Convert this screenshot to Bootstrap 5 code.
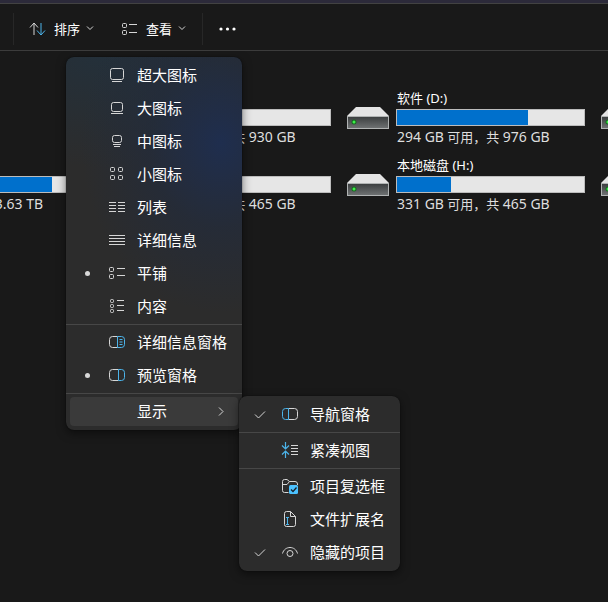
<!DOCTYPE html>
<html lang="zh-CN" data-bs-theme="dark">
<head>
<meta charset="utf-8">
<meta name="viewport" content="width=device-width, initial-scale=1">
<title>此电脑</title>
<link href="https://cdn.jsdelivr.net/npm/bootstrap@5.3.0/dist/css/bootstrap.min.css" rel="stylesheet">
<style>
body { background: #191919; color: #fff; font-family: "Noto Sans", "Noto Sans CJK SC", sans-serif; font-size: 13px; line-height: 20px; }
svg { fill: none; stroke: #d6d6d6; display: block; flex: none; }
svg .accent { stroke: #4cb4ea; }
.titlebar-edge { height: 4px; background: #2c2a3a; border-bottom: 1px solid #424242; }
.toolbar { height: 47px; border-bottom: 1px solid #3c3c3c; padding: 4px 0 0 13px; }
.toolbar .btn { --bs-btn-padding-x: 0; --bs-btn-padding-y: 0; --bs-btn-font-size: 13px; --bs-btn-color: #fff; --bs-btn-border-width: 0; line-height: 20px; }
.toolbar .vr { height: 32px; color: #555; align-self: center; }
.toolbar .dots { fill: #fff; stroke: none; }
.tool-sort { margin-left: 15px; }
.tool-view { margin: 0 16px 0 27px; }
.tool-more { margin-left: 16px; }
.chev { margin-left: -2px; }
.pane-area { min-height: calc(100vh - 51px); padding-top: 37px; }
.drives { display: grid; grid-template-columns: repeat(4, 238px); gap: 8px 16px; margin-left: -161px; }
.drive { gap: 7px; }
.drive-art { margin-top: 19px; stroke: none; }
.drive-name, .drive-free { padding-left: 1px; min-height: 20px; white-space: nowrap; }
.drive-free { color: #dedede; }
.drive-free .amount { font-size: 14px; }
.drive .progress { --bs-progress-height: 17px; --bs-progress-bg: #e6e6e6; --bs-progress-bar-bg: #0070cc; --bs-progress-border-radius: 0; border: 1px solid #bcbcbc; margin: 1px 0; }
.second-col { grid-column-start: 2; }
.popup { --bs-dropdown-bg: #2c2c2c; --bs-dropdown-border-width: 0; --bs-dropdown-border-radius: 8px; --bs-dropdown-padding-y: 2px; --bs-dropdown-padding-x: 0; --bs-dropdown-min-width: 0; --bs-dropdown-divider-bg: #474747; --bs-dropdown-divider-margin-y: 1px; --bs-dropdown-font-size: 15px; box-shadow: 0 3px 10px rgba(0,0,0,.5), 0 0 1px #000; }
.popup.show { display: flex; flex-direction: column; }
.popup .dropdown-divider { opacity: 1; }
.popup .dropdown-item { --bs-dropdown-item-padding-x: 0; --bs-dropdown-item-padding-y: 0; color: #fff; width: auto; height: 29px; margin: 2px 4px; border-radius: 4px; line-height: 29px; }
.popup .dropdown-item:hover, .popup .dropdown-item.is-open { background: #3a3a3a; }
.view-menu { top: 6px; left: 66px; width: 176px;
  background: radial-gradient(ellipse 140px 170px at 88% 23%, rgba(30,46,80,.95), rgba(33,43,62,.6) 50%, transparent), radial-gradient(ellipse 190px 110px at 20% 0, #24303a, transparent), #2c2c2c; }
.show-menu { top: 339px; left: 173px; width: 161px; }
.mark-slot { width: 34px; margin-right: 4px; flex: none; display: flex; justify-content: center; }
.bullet { width: 5px; height: 5px; border-radius: 50%; background: #d8d8d8; }
.icon-slot { width: 18px; flex: none; margin-right: 11px; }
.open-arrow { margin-left: auto; margin-right: 13px; }
</style>
<script src="https://cdn.jsdelivr.net/npm/bootstrap@5.3.0/dist/js/bootstrap.bundle.min.js"></script>
</head>
<body>
<svg class="position-absolute" width="0" height="0" aria-hidden="true">
  <defs>
    <linearGradient id="front" x1="0" y1="0" x2="0" y2="1"><stop offset="0" stop-color="#3a3d3e"/><stop offset="1" stop-color="#707374"/></linearGradient>
    <symbol id="disk" viewBox="0 0 42 22">
      <path d="M9 0H33L42 9H0Z" fill="#e4e4e4"/>
      <rect x=".5" y="9.500" width="41" height="12" fill="url(#front)" stroke="#b0b3b3"/>
      <circle cx="7" cy="15" r="2.500" fill="#176a20"/><circle cx="7" cy="15" r="1.500" fill="#3df04a"/>
    </symbol>
  </defs>
</svg>
<div class="titlebar-edge"></div>
<header class="toolbar d-flex align-items-center" role="toolbar" aria-label="命令栏">
  <div class="vr"></div>
  <button type="button" class="btn tool-sort d-flex align-items-center">
    <svg width="17" height="16" viewBox="0 0 17 16"><path d="M5 14V2M1 6.500L5 2L9 6.500"/><path class="accent" d="M12 2V14M8 9.500L12 14L16 9.500"/></svg>
    <span class="ms-2 me-2">排序</span>
    <svg class="chev" width="8" height="8" viewBox="0 0 8 8"><path d="M1 1.500L4 4.500L7 1.500"/></svg>
  </button>
  <button type="button" class="btn tool-view d-flex align-items-center" aria-haspopup="menu" aria-expanded="true">
    <svg width="17" height="16" viewBox="0 0 17 16"><rect x="1.500" y="2.500" width="4" height="4" rx="1"/><rect x="1.500" y="9.500" width="4" height="4" rx="1"/><path d="M8 3.500H16M8 11.500H16"/></svg>
    <span class="ms-2 me-2">查看</span>
    <svg class="chev" width="8" height="8" viewBox="0 0 8 8"><path d="M1 1.500L4 4.500L7 1.500"/></svg>
  </button>
  <div class="vr"></div>
  <button type="button" class="btn tool-more" aria-label="查看更多">
    <svg class="dots" width="17" height="6" viewBox="0 0 17 6"><circle cx="2" cy="3" r="1.600"/><circle cx="8.500" cy="3" r="1.600"/><circle cx="15" cy="3" r="1.600"/></svg>
  </button>
</header>

<main class="pane-area position-relative overflow-hidden">
  <section class="drives" aria-label="设备和驱动器">
    <article class="drive d-flex second-col">
      <svg class="drive-art" width="42" height="22"><use href="#disk"/></svg>
      <div class="flex-grow-1"><div class="drive-name"></div><div class="progress"><div class="progress-bar" style="width:40%"></div></div><div class="drive-free"><span class="amount">558 GB</span> 可用，共 <span class="amount">930 GB</span></div></div>
    </article>
    <article class="drive d-flex">
      <svg class="drive-art" width="42" height="22"><use href="#disk"/></svg>
      <div class="flex-grow-1"><div class="drive-name">软件 (D:)</div><div class="progress"><div class="progress-bar" style="width:70%"></div></div><div class="drive-free"><span class="amount">294 GB</span> 可用，共 <span class="amount">976 GB</span></div></div>
    </article>
    <article class="drive d-flex">
      <svg class="drive-art" width="42" height="22"><use href="#disk"/></svg>
      <div class="flex-grow-1"><div class="drive-name"></div><div class="progress"></div></div>
    </article>
    <article class="drive d-flex">
      <svg class="drive-art" width="42" height="22"><use href="#disk"/></svg>
      <div class="flex-grow-1"><div class="drive-name"></div><div class="progress"><div class="progress-bar" style="width:87%"></div></div><div class="drive-free"><span class="amount">483 GB</span> 可用，共 <span class="amount">3.63 TB</span></div></div>
    </article>
    <article class="drive d-flex">
      <svg class="drive-art" width="42" height="22"><use href="#disk"/></svg>
      <div class="flex-grow-1"><div class="drive-name"></div><div class="progress"><div class="progress-bar" style="width:40%"></div></div><div class="drive-free"><span class="amount">279 GB</span> 可用，共 <span class="amount">465 GB</span></div></div>
    </article>
    <article class="drive d-flex">
      <svg class="drive-art" width="42" height="22"><use href="#disk"/></svg>
      <div class="flex-grow-1"><div class="drive-name">本地磁盘 (H:)</div><div class="progress"><div class="progress-bar" style="width:29%"></div></div><div class="drive-free"><span class="amount">331 GB</span> 可用，共 <span class="amount">465 GB</span></div></div>
    </article>
    <article class="drive d-flex">
      <svg class="drive-art" width="42" height="22"><use href="#disk"/></svg>
      <div class="flex-grow-1"><div class="drive-name"></div><div class="progress"></div></div>
    </article>
  </section>

  <div class="dropdown-menu popup view-menu show" role="menu" aria-label="查看">
    <button type="button" class="dropdown-item d-flex align-items-center" role="menuitemradio" aria-checked="false"><span class="mark-slot"></span>
      <svg class="icon-slot" width="18" height="17"><rect x="2.500" y="1.500" width="13" height="11" rx="2"/><path d="M4 14.500H14"/></svg>超大图标</button>
    <button type="button" class="dropdown-item d-flex align-items-center" role="menuitemradio" aria-checked="false"><span class="mark-slot"></span>
      <svg class="icon-slot" width="18" height="17"><rect x="3.500" y="2.500" width="11" height="9" rx="2"/><path d="M3 13.500H15"/></svg>大图标</button>
    <button type="button" class="dropdown-item d-flex align-items-center" role="menuitemradio" aria-checked="false"><span class="mark-slot"></span>
      <svg class="icon-slot" width="18" height="17"><rect x="4.500" y="2.500" width="9" height="7" rx="2"/><path d="M5 11.500H13M6 13.500H12"/></svg>中图标</button>
    <button type="button" class="dropdown-item d-flex align-items-center" role="menuitemradio" aria-checked="false"><span class="mark-slot"></span>
      <svg class="icon-slot" width="18" height="17"><rect x="2.500" y="1.500" width="4" height="4" rx="1"/><rect x="10.500" y="1.500" width="4" height="4" rx="1"/><rect x="2.500" y="9.500" width="4" height="4" rx="1"/><rect x="10.500" y="9.500" width="4" height="4" rx="1"/></svg>小图标</button>
    <button type="button" class="dropdown-item d-flex align-items-center" role="menuitemradio" aria-checked="false"><span class="mark-slot"></span>
      <svg class="icon-slot" width="18" height="17"><path d="M1 3.500H8M10 3.500H17M1 6.500H8M10 6.500H17M1 9.500H8M10 9.500H17M1 12.500H8M10 12.500H17"/></svg>列表</button>
    <button type="button" class="dropdown-item d-flex align-items-center" role="menuitemradio" aria-checked="false"><span class="mark-slot"></span>
      <svg class="icon-slot" width="18" height="17"><path d="M1 3.500H17M1 6.500H17M1 9.500H17M1 12.500H17"/></svg>详细信息</button>
    <button type="button" class="dropdown-item d-flex align-items-center" role="menuitemradio" aria-checked="true"><span class="mark-slot"><span class="bullet"></span></span>
      <svg class="icon-slot" width="18" height="17"><rect x="1.500" y="2.500" width="4" height="4" rx="1"/><rect x="1.500" y="9.500" width="4" height="4" rx="1"/><path d="M9 3.500H17M9 10.500H17"/></svg>平铺</button>
    <button type="button" class="dropdown-item d-flex align-items-center" role="menuitemradio" aria-checked="false"><span class="mark-slot"></span>
      <svg class="icon-slot" width="18" height="17"><rect x="2.500" y="1.500" width="3" height="3" rx="1"/><rect x="2.500" y="6.500" width="3" height="3" rx="1"/><rect x="2.500" y="11.500" width="3" height="3" rx="1"/><path d="M9 2.500H16M9 7.500H16M9 12.500H16"/></svg>内容</button>
    <hr class="dropdown-divider">
    <button type="button" class="dropdown-item d-flex align-items-center" role="menuitemradio" aria-checked="false"><span class="mark-slot"></span>
      <svg class="icon-slot" width="18" height="17"><path d="M9.500 2.500H4.500Q1.500 2.500 1.500 5.500V10.500Q1.500 13.500 4.500 13.500H9.500"/><path class="accent" d="M9.500 2.500H13.500Q16.500 2.500 16.500 5.500V10.500Q16.500 13.500 13.500 13.500H9.500ZM11.500 5.500H14.500M11.500 8H14.500M11.500 10.500H14.500"/></svg>详细信息窗格</button>
    <button type="button" class="dropdown-item d-flex align-items-center" role="menuitemradio" aria-checked="true"><span class="mark-slot"><span class="bullet"></span></span>
      <svg class="icon-slot" width="18" height="17"><path d="M10.500 2.500H4.500Q1.500 2.500 1.500 5.500V10.500Q1.500 13.500 4.500 13.500H10.500"/><path class="accent" d="M10.500 2.500H13.500Q16.500 2.500 16.500 5.500V10.500Q16.500 13.500 13.500 13.500H10.500Z"/></svg>预览窗格</button>
    <hr class="dropdown-divider">
    <button type="button" class="dropdown-item is-open d-flex align-items-center" role="menuitem" aria-haspopup="menu" aria-expanded="true"><span class="mark-slot"></span><span class="icon-slot"></span>显示
      <svg class="open-arrow" width="7" height="11"><path d="M1 1.500L5 5.500L1 9.500"/></svg></button>

    <div class="dropdown-menu popup show-menu show" role="menu" aria-label="显示">
      <button type="button" class="dropdown-item d-flex align-items-center" role="menuitemcheckbox" aria-checked="true"><span class="mark-slot"><svg width="12" height="9"><path d="M1 4.500L4.500 8L11 1.500"/></svg></span>
        <svg class="icon-slot" width="18" height="17"><path d="M7.500 2.500H13.500Q16.500 2.500 16.500 5.500V10.500Q16.500 13.500 13.500 13.500H7.500"/><path class="accent" d="M7.500 2.500H4.500Q1.500 2.500 1.500 5.500V10.500Q1.500 13.500 4.500 13.500H7.500Z"/></svg>导航窗格</button>
      <hr class="dropdown-divider">
      <button type="button" class="dropdown-item d-flex align-items-center" role="menuitemcheckbox" aria-checked="false"><span class="mark-slot"></span>
        <svg class="icon-slot" width="18" height="17"><path class="accent" d="M4.500 0V6.500M1 3.500L4.500 7L8 3.500M4.500 16V9.500M1 12.500L4.500 9L8 12.500" stroke-width="1.200"/><path d="M10 3.500H17M10 6.500H17M10 9.500H17M10 12.500H17"/></svg>紧凑视图</button>
      <hr class="dropdown-divider">
      <button type="button" class="dropdown-item d-flex align-items-center" role="menuitemcheckbox" aria-checked="false"><span class="mark-slot"></span>
        <svg class="icon-slot" width="18" height="17"><path d="M7.500 14.500H3.500Q1.500 14.500 1.500 12.500V3.500Q1.500 1.500 3.500 1.500H6L8.500 3.500H14Q16.500 3.500 16.500 6V7M1.500 6.500H6L8.500 3.500"/><rect x="8" y="7" width="9" height="9" rx="1.500" style="fill:#4cc2ff;stroke:none"/><path d="M10 11.500L12 13.500L15.500 9.500" style="stroke:#16202a;stroke-width:1.300"/></svg>项目复选框</button>
      <button type="button" class="dropdown-item d-flex align-items-center" role="menuitemcheckbox" aria-checked="false"><span class="mark-slot"></span>
        <svg class="icon-slot" width="18" height="17"><path d="M3.500 4V2.500Q3.500 .5 5.500 .5H9.500L14.500 5.500V13.500Q14.500 15.500 12.500 15.500H5.500Q3.500 15.500 3.500 13.500V4M9.500 .5V5.500H14.500"/><path class="accent" d="M6.500 6.500V13.500M5 6.500H8M5 13.500H8"/></svg>文件扩展名</button>
      <button type="button" class="dropdown-item d-flex align-items-center" role="menuitemcheckbox" aria-checked="true"><span class="mark-slot"><svg width="12" height="9"><path d="M1 4.500L4.500 8L11 1.500"/></svg></span>
        <svg class="icon-slot" width="18" height="17"><path d="M1.500 9.500C3.500 1.500 14.500 1.500 16.500 9.500"/><circle cx="9" cy="9.500" r="3"/></svg>隐藏的项目</button>
    </div>
  </div>
</main>
</body>
</html>
